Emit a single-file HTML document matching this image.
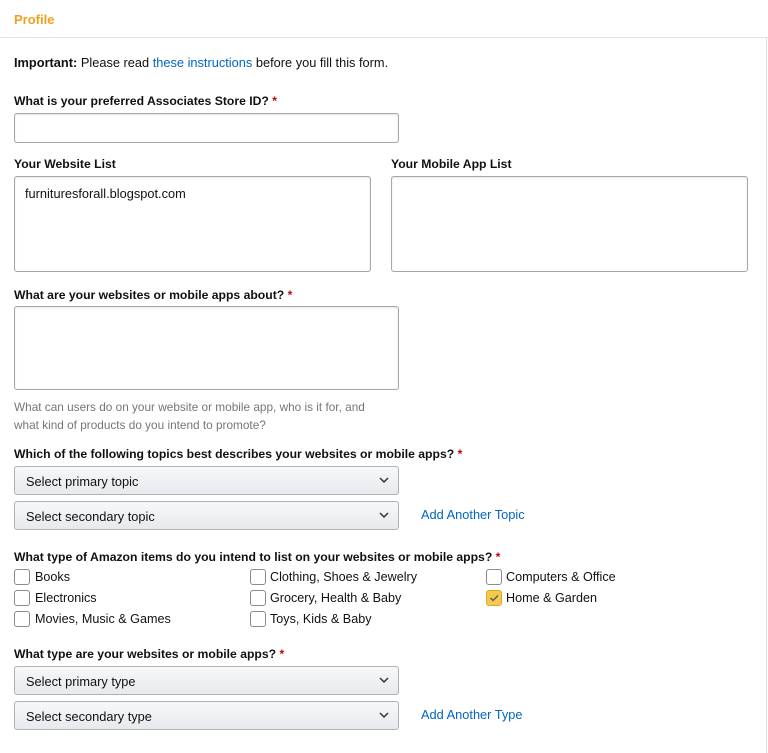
<!DOCTYPE html>
<html><head><style>
*{box-sizing:border-box;margin:0;padding:0}
body{width:768px;height:753px;background:#fff;font-family:"Liberation Sans",sans-serif;font-size:12.8px;color:#111;position:relative;overflow:hidden}
.a{position:absolute;white-space:nowrap}
.b{font-weight:bold;font-size:12.2px}
.r{color:#c40000}
.box{position:absolute;border:1px solid #a6a6a6;border-radius:3px;background:#fff;box-shadow:inset 0 1px 2px rgba(0,0,0,.1)}
.sel{position:absolute;left:14px;width:385px;height:29px;border:1px solid #adb1b8;border-radius:3px;background:linear-gradient(#f7f8fa,#e7e9ec);padding:7px 11px;font-size:12.8px;color:#111}
.sel svg{position:absolute;right:9px;top:10px}
.lnk{color:#0066c0}
.cb{position:absolute;width:16px;height:16px;border:1px solid #888c8c;border-radius:3px;background:#fff}
.cl{position:absolute;font-size:12.6px;color:#111;white-space:nowrap}
</style></head><body>
<div class="a" style="left:14px;top:12px;color:#f0a01e;font-size:13px;font-weight:bold">Profile</div>
<div style="position:absolute;left:0;top:37px;width:768px;height:1px;background:#e3e3e3"></div>
<div style="position:absolute;left:766px;top:38px;width:1px;height:715px;background:#ddd"></div>
<div class="a" style="left:14px;top:55px"><span style="font-weight:bold">Important:</span> Please read <span class="lnk">these instructions</span> before you fill this form.</div>
<div class="a b" style="left:14px;top:94px">What is your preferred Associates Store ID? <span class="r">*</span></div>
<div class="box" style="left:14px;top:113px;width:385px;height:30px"></div>
<div class="a b" style="left:14px;top:157px">Your Website List</div>
<div class="a b" style="left:391px;top:157px">Your Mobile App List</div>
<div class="box" style="left:14px;top:176px;width:357px;height:96px"></div>
<div class="a" style="left:25px;top:186px">furnituresforall.blogspot.com</div>
<div class="box" style="left:391px;top:176px;width:357px;height:96px"></div>
<div class="a b" style="left:14px;top:288px">What are your websites or mobile apps about? <span class="r">*</span></div>
<div class="box" style="left:14px;top:306px;width:385px;height:84px"></div>
<div class="a" style="left:14px;top:398px;color:#767676;font-size:11.8px;line-height:18px">What can users do on your website or mobile app, who is it for, and<br>what kind of products do you intend to promote?</div>
<div class="a b" style="left:14px;top:447px">Which of the following topics best describes your websites or mobile apps? <span class="r">*</span></div>
<div class="sel" style="top:466px">Select primary topic<svg width="10" height="7"><path d="M1 1l4 4 4-4" stroke="#333" stroke-width="1.5" fill="none"/></svg></div>
<div class="sel" style="top:501px">Select secondary topic<svg width="10" height="7"><path d="M1 1l4 4 4-4" stroke="#333" stroke-width="1.5" fill="none"/></svg></div>
<div class="a lnk" style="left:421px;top:507px;font-size:12.8px">Add Another Topic</div>
<div class="a b" style="left:14px;top:550px">What type of Amazon items do you intend to list on your websites or mobile apps? <span class="r">*</span></div>
<div class="cb" style="left:14px;top:569px"></div><div class="cl" style="left:35px;top:570px">Books</div>
<div class="cb" style="left:14px;top:590px"></div><div class="cl" style="left:35px;top:591px">Electronics</div>
<div class="cb" style="left:14px;top:611px"></div><div class="cl" style="left:35px;top:612px">Movies, Music &amp; Games</div>
<div class="cb" style="left:250px;top:569px"></div><div class="cl" style="left:270px;top:570px">Clothing, Shoes &amp; Jewelry</div>
<div class="cb" style="left:250px;top:590px"></div><div class="cl" style="left:270px;top:591px">Grocery, Health &amp; Baby</div>
<div class="cb" style="left:250px;top:611px"></div><div class="cl" style="left:270px;top:612px">Toys, Kids &amp; Baby</div>
<div class="cb" style="left:486px;top:569px"></div><div class="cl" style="left:506px;top:570px">Computers &amp; Office</div>
<div class="cb" style="left:486px;top:590px;background:#f7ca4d;border-color:#d9a52a"><svg width="14" height="14" style="position:absolute;left:0;top:0"><path d="M3.5 7l2.5 2.5 5-5" stroke="#555" stroke-width="1.3" fill="none"/></svg></div><div class="cl" style="left:506px;top:591px">Home &amp; Garden</div>
<div class="a b" style="left:14px;top:647px">What type are your websites or mobile apps? <span class="r">*</span></div>
<div class="sel" style="top:666px">Select primary type<svg width="10" height="7"><path d="M1 1l4 4 4-4" stroke="#333" stroke-width="1.5" fill="none"/></svg></div>
<div class="sel" style="top:701px">Select secondary type<svg width="10" height="7"><path d="M1 1l4 4 4-4" stroke="#333" stroke-width="1.5" fill="none"/></svg></div>
<div class="a lnk" style="left:421px;top:707px;font-size:12.8px">Add Another Type</div>
</body></html>
